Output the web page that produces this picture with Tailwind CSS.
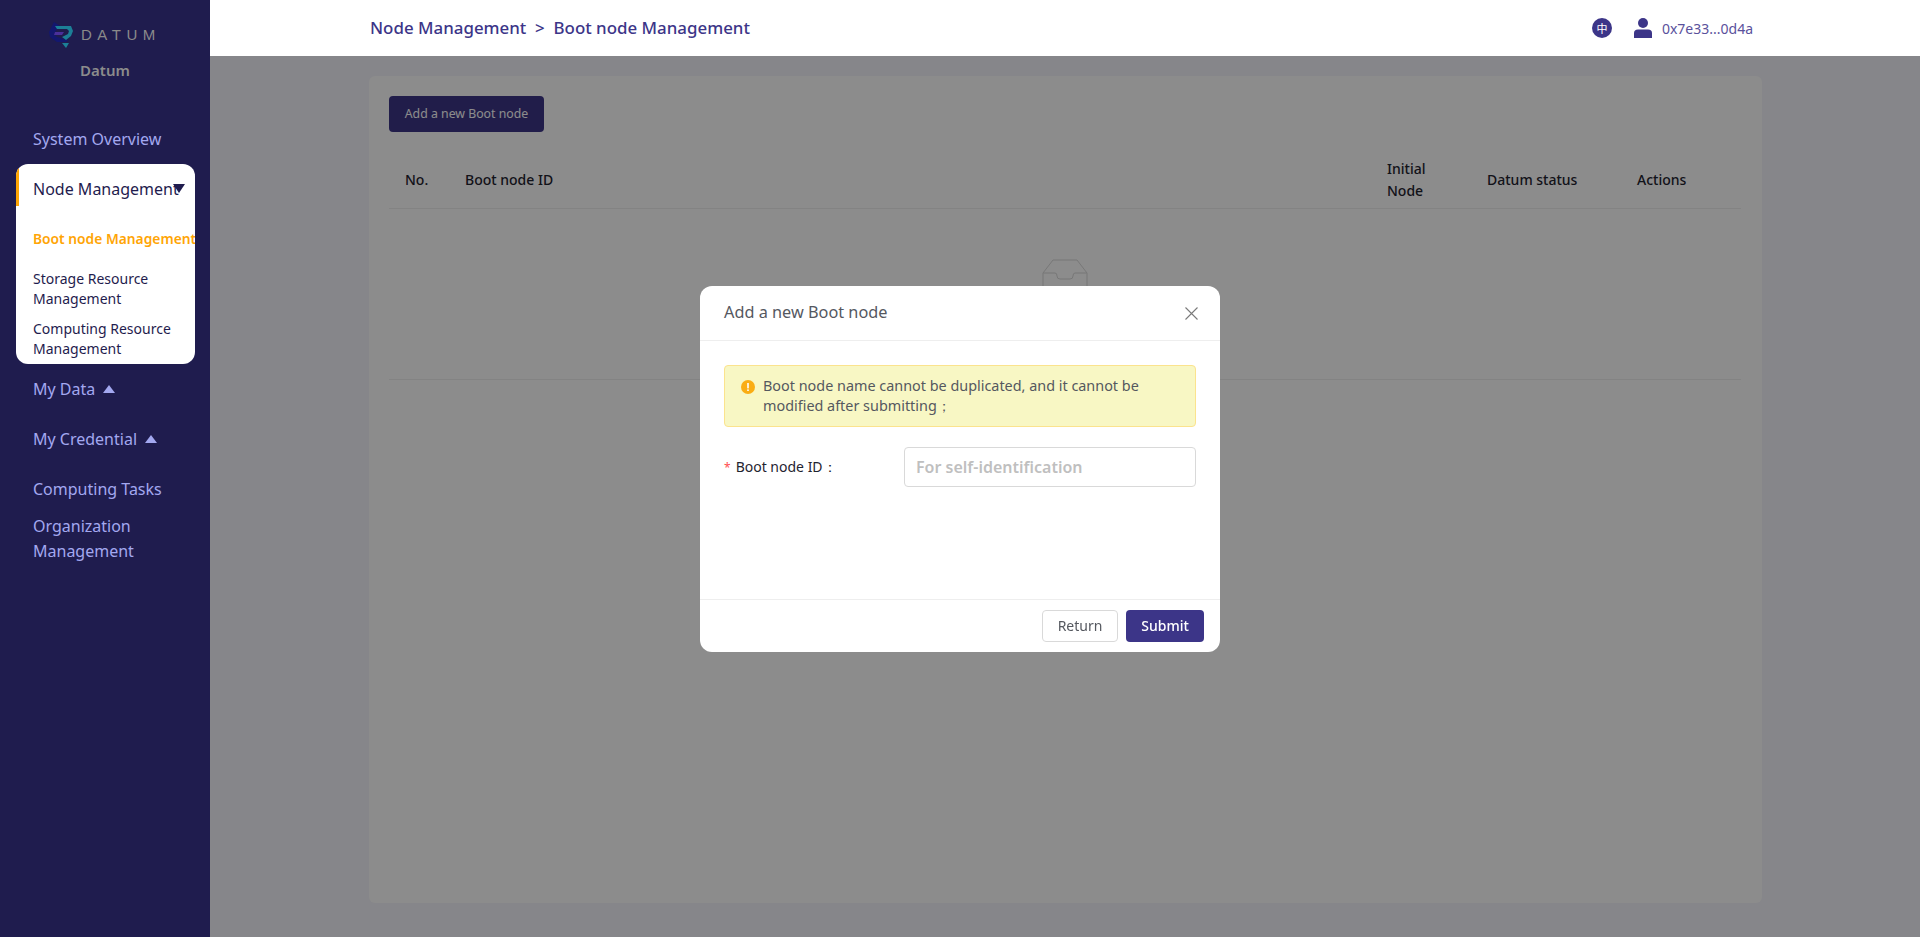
<!DOCTYPE html>
<html lang="en">
<head>
    <meta charset="UTF-8">
    <meta name="viewport" content="width=device-width, initial-scale=1.0">
    <title>Datum</title>
    <script src="https://cdn.jsdelivr.net/npm/@tailwindcss/browser@4"></script>
</head>
<body class="h-[937px] overflow-hidden font-['Noto_Sans',sans-serif] bg-[#f4f4fb]">

    <div class="flex h-full">
        <!-- Sidebar -->
        <aside class="w-[210px] shrink-0 bg-[#1f1c4e] flex flex-col">
            <div class="h-[114px] pt-[21px] flex flex-col items-center">
                <div class="flex items-center gap-[7px] w-[112px] h-[27px]">
                    <svg class="shrink-0" width="25" height="27" viewBox="0 0 25 27">
                        <path d="M5 1 L0 11 L1 16 L8 21 H17 L19 19 L8 16 L5 13 L8 8 L11 5 Z" fill="#13176f"/>
                        <path d="M6 5 H22 L24 10 L22 15 L17 19 L13 16 L19 13 L20 10 L18 8 H8 Z" fill="#1c7f97"/>
                        <path d="M6 11 H15 L13 14 H5 Z" fill="#4a2f9b"/>
                        <path d="M13 22 H20 L17 27 Z" fill="#1c7f97"/>
                    </svg>
                    <span class="font-['Liberation_Sans',sans-serif] text-[15px] leading-none tracking-[5.5px] text-[#8a8a8a]">DATUM</span>
                </div>
                <div class="mt-[12px] text-[15px] leading-5 font-semibold text-[#8c8c8c]">Datum</div>
            </div>

            <nav class="text-[16px] text-[#a3a8f0]">
                <a class="flex items-center h-[50px] pl-[33px]">System Overview</a>

                <!-- open group -->
                <div class="relative ml-4 w-[179px] h-[200px] bg-white rounded-xl overflow-hidden text-[#1f1c4e]">
                    <div class="absolute left-0 top-0 w-[3px] h-[42px] bg-[#ffa505]"></div>
                    <div class="relative flex items-center h-[50px] pl-[17px] whitespace-nowrap">
                        Node Management
                        <svg class="absolute left-[157px] top-[20px]" width="12" height="9" viewBox="0 0 12 9"><path d="M0 0 H12 L6 9 Z" fill="#1f1c4e"/></svg>
                    </div>
                    <div class="flex items-center h-[50px] pl-[17px] text-[13.8px] font-semibold text-[#ffa505] whitespace-nowrap">Boot node Management</div>
                    <div class="mt-[5px] pl-[17px] text-[14px] leading-5">Storage Resource<br>Management</div>
                    <div class="mt-[10px] pl-[17px] text-[14px] leading-5">Computing Resource<br>Management</div>
                </div>

                <a class="flex items-center gap-2 h-[50px] pl-[33px]">My Data
                    <svg width="12" height="8" viewBox="0 0 12 8"><path d="M6 0 L12 8 H0 Z" fill="#a3a8f0"/></svg>
                </a>
                <a class="flex items-center gap-2 h-[50px] pl-[33px]">My Credential
                    <svg width="12" height="8" viewBox="0 0 12 8"><path d="M6 0 L12 8 H0 Z" fill="#a3a8f0"/></svg>
                </a>
                <a class="flex items-center h-[50px] pl-[33px]">Computing Tasks</a>
                <a class="block pl-[33px] leading-[25px]">Organization<br>Management</a>
            </nav>
        </aside>

        <div class="relative flex-1 flex flex-col min-w-0">
            <!-- Top bar -->
            <header class="h-14 shrink-0 bg-white flex items-center pl-[160px] pr-[167px] text-[#3c3588]">
                <div class="text-[16.9px] font-medium whitespace-pre">Node Management  &gt;  Boot node Management</div>
                <div class="ml-auto flex items-center">
                    <span class="w-5 h-5 rounded-full bg-[#3c3588] text-white text-[11px] flex items-center justify-center font-['Noto_Sans_CJK_SC',sans-serif]">中</span>
                    <svg class="ml-[21px]" width="20" height="20" viewBox="0 0 20 20" fill="#3c3588">
                        <circle cx="10" cy="5" r="5"/>
                        <path d="M1 20 V15 Q1 11.5 5 11.5 H15 Q19 11.5 19 15 V20 Z"/>
                    </svg>
                    <span class="ml-[9px] text-[14px] text-[#5a519c]">0x7e33...0d4a</span>
                </div>
            </header>

            <!-- Page content -->
            <main class="flex-1 pl-[159px] pr-[158px] pt-[20px] pb-[34px]">
                <div class="h-full bg-white rounded-md pl-[20px] pr-[21px] pt-[20px]">
                    <button class="w-[155px] h-9 bg-[#3c3588] rounded-sm text-[12.3px] text-white">Add a new Boot node</button>

                    <div class="mt-[20px] grid grid-cols-[60px_1fr_100px_150px_120px] items-center h-[57px] border-b border-[#eeeeee] text-[14px] font-medium leading-[22px] text-[#1f2430]">
                        <div class="pl-[16px]">No.</div>
                        <div class="pl-[16px]">Boot node ID</div>
                        <div class="pl-[16px]">Initial<br>Node</div>
                        <div class="pl-[16px]">Datum status</div>
                        <div class="pl-[16px]">Actions</div>
                    </div>

                    <div class="h-[171px] border-b border-[#eeeeee] flex justify-center pt-[50px]">
                        <svg width="46" height="32" viewBox="0 0 46 32" fill="none" stroke="#d9d9d9" stroke-width="1">
                            <path d="M1 31 V14 L11 1 H35 L45 14 V31 Z"/>
                            <path d="M1 14 H13 Q15 14 15 17 Q15 20 18 20 H28 Q31 20 31 17 Q31 14 33 14 H45"/>
                        </svg>
                    </div>
                </div>
            </main>

            <!-- Dim layer over the content only -->
            <div class="absolute left-0 right-0 top-14 bottom-0 bg-black/45"></div>
        </div>
    </div>

    <!-- Modal -->
    <div class="fixed inset-0 flex items-center justify-center">
        <div class="w-[520px] h-[366px] bg-white rounded-xl flex flex-col">
            <div class="h-[55px] shrink-0 px-6 flex items-center justify-between border-b border-[#eeeeee]">
                <span class="text-[16.3px] text-[#55585f]">Add a new Boot node</span>
                <svg class="mr-[-2px] mt-[1px]" width="13" height="13" viewBox="0 0 13 13" stroke="#7a7a7a" stroke-width="1.1"><path d="M0.5 0.5 L12.5 12.5 M12.5 0.5 L0.5 12.5"/></svg>
            </div>

            <div class="flex-1 px-6 pt-6">
                <div class="flex h-[62px] pl-4 pr-4 pt-[10px] bg-[#f8f7c4] border border-[#fbe38e] rounded-sm">
                    <svg class="mt-[4px] shrink-0" width="14" height="14" viewBox="0 0 14 14"><circle cx="7" cy="7" r="7" fill="#faad14"/><rect x="6.2" y="3" width="1.6" height="5.4" fill="#fff"/><rect x="6.2" y="9.4" width="1.6" height="1.6" fill="#fff"/></svg>
                    <p class="ml-[8px] text-[14.4px] leading-5 text-[#55585f]">Boot node name cannot be duplicated, and it cannot be modified after submitting；</p>
                </div>

                <div class="mt-5 flex items-center h-10">
                    <label class="w-[180px] text-[14px] text-[#1f2430] whitespace-nowrap"><span class="text-[#ff4d4f] text-[12px] mr-[5px]">*</span>Boot node ID：</label>
                    <input class="w-[292px] h-10 px-[11px] border border-[#d9d9d9] rounded-sm text-[16px] font-semibold outline-none placeholder:text-[#bfbfbf]" placeholder="For self-identification">
                </div>
            </div>

            <div class="h-[53px] shrink-0 border-t border-[#eeeeee] pr-4 flex items-start justify-end gap-2 pt-[10px]">
                <button class="w-[76px] h-8 border border-[#d9d9d9] rounded-sm text-[14px] text-[#55585f]">Return</button>
                <button class="w-[78px] h-8 bg-[#3c3588] rounded-sm text-[14px] font-medium text-white">Submit</button>
            </div>
        </div>
    </div>

</body>
</html>
